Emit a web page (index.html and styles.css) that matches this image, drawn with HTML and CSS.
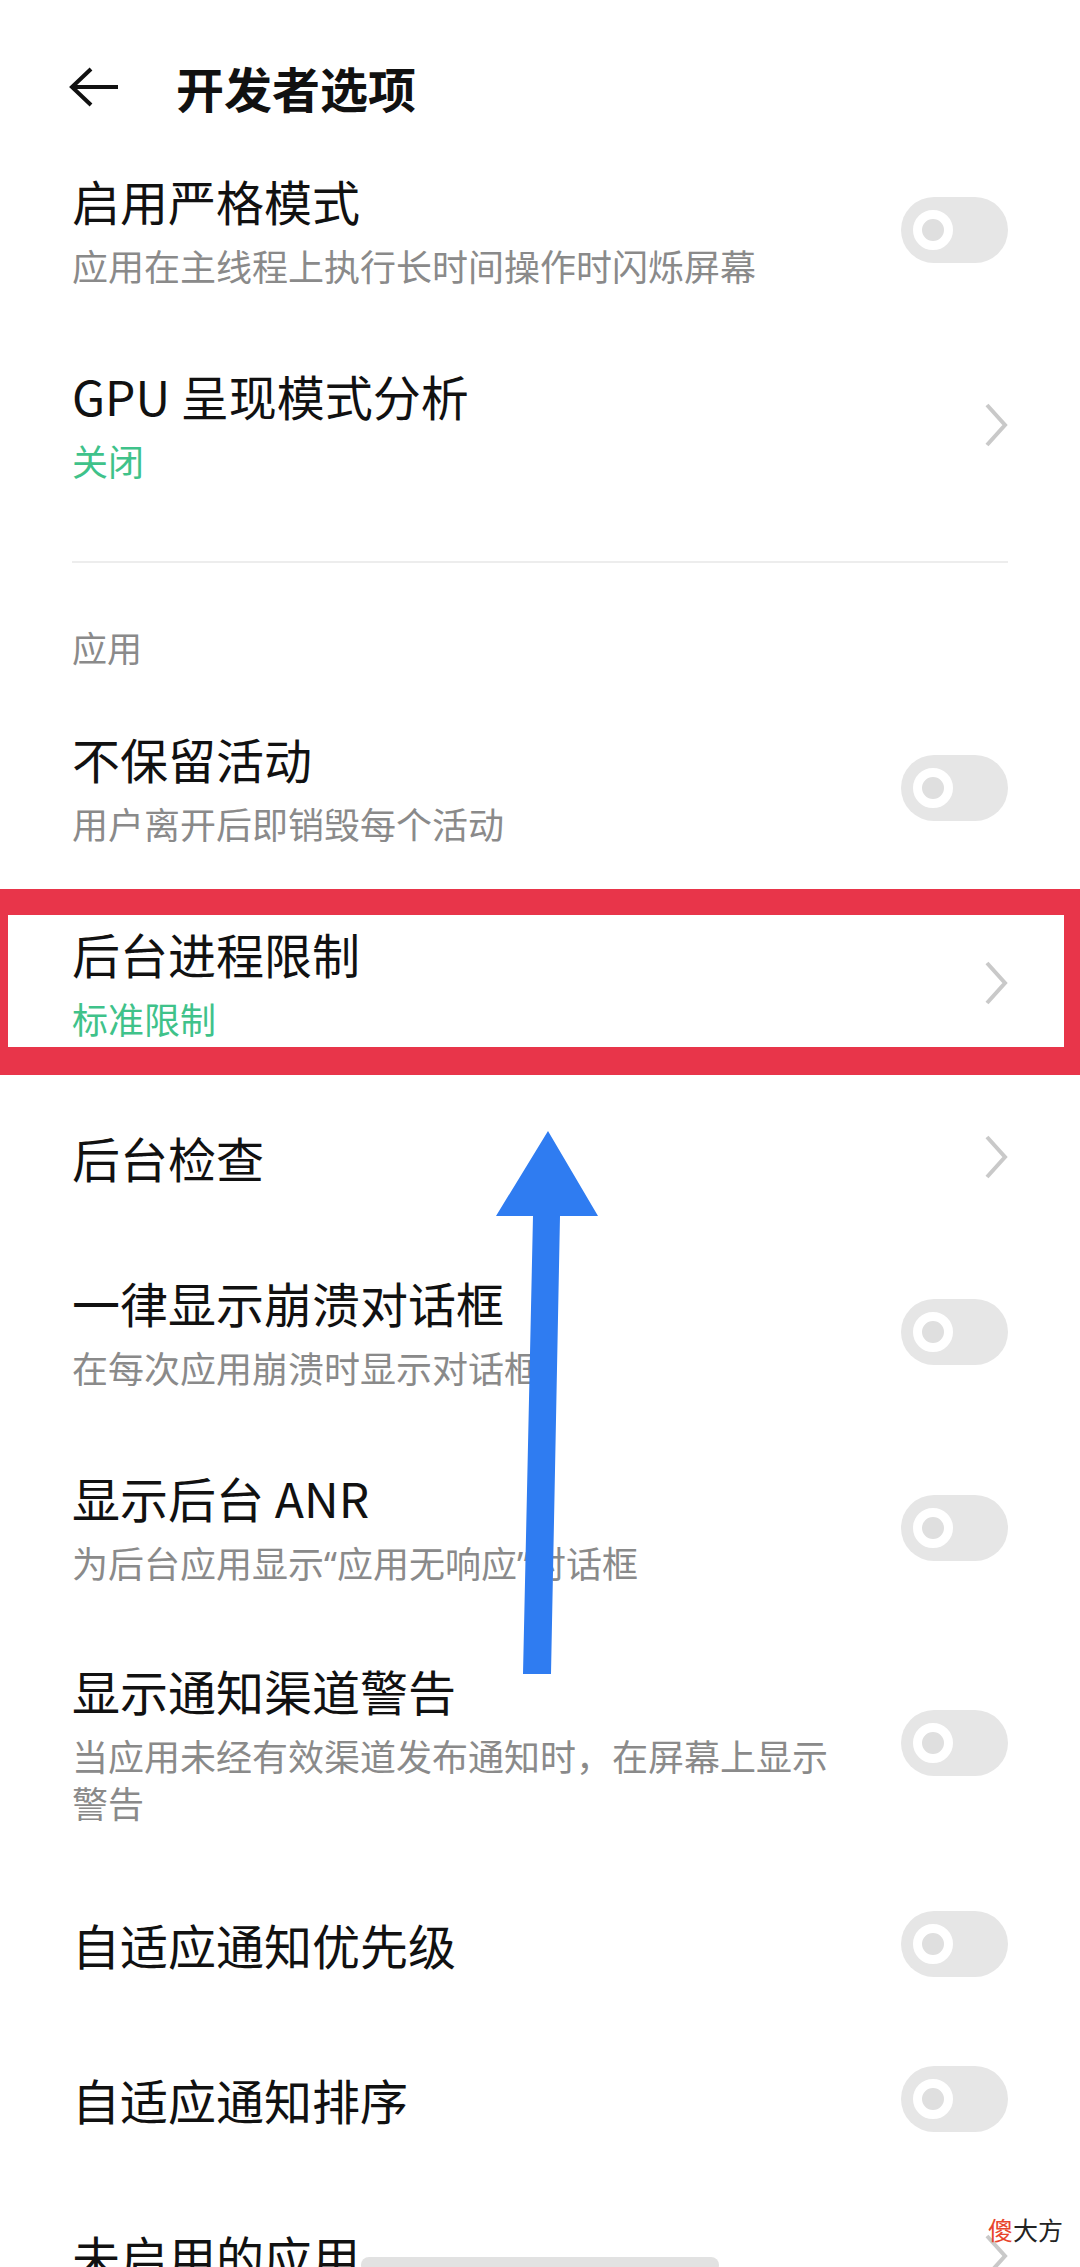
FILE: index.html
```html
<!DOCTYPE html>
<html lang="zh-CN">
<head>
    <meta charset="UTF-8">
    <meta name="viewport" content="width=device-width, initial-scale=1.0">
    <title>开发者选项</title>
    <link rel="stylesheet" href="styles.css">
</head>
<body>
    <div class="pantalla">
        <div class="cabecera">
            <svg class="atras" viewBox="0 0 50 40" width="50" height="40">
                <path d="M49 20 H4 M22 2 L3 20 L22 38" fill="none" stroke="#111" stroke-width="4" stroke-linejoin="miter"/>
            </svg>
            <h1 class="titulo">开发者选项</h1>
        </div>

        <div class="item">
            <div class="textos">
                <div class="nombre">启用严格模式</div>
                <div class="detalle">应用在主线程上执行长时间操作时闪烁屏幕</div>
            </div>
            <span class="switch"><span class="bola"></span></span>
        </div>

        <div class="item">
            <div class="textos">
                <div class="nombre">GPU 呈现模式分析</div>
                <div class="detalle verde">关闭</div>
            </div>
            <svg class="flecha" viewBox="0 0 24 44" width="24" height="44"><path d="M3 2 L21 22 L3 42" fill="none" stroke="#c9c9c9" stroke-width="4"/></svg>
        </div>

        <div class="separador"></div>
        <div class="seccion">应用</div>

        <div class="item">
            <div class="textos">
                <div class="nombre">不保留活动</div>
                <div class="detalle">用户离开后即销毁每个活动</div>
            </div>
            <span class="switch"><span class="bola"></span></span>
        </div>

        <div class="item marcado">
            <div class="textos">
                <div class="nombre">后台进程限制</div>
                <div class="detalle verde">标准限制</div>
            </div>
            <svg class="flecha" viewBox="0 0 24 44" width="24" height="44"><path d="M3 2 L21 22 L3 42" fill="none" stroke="#c9c9c9" stroke-width="4"/></svg>
            <div class="recuadro"></div>
        </div>

        <div class="item simple">
            <div class="textos">
                <div class="nombre">后台检查</div>
            </div>
            <svg class="flecha" viewBox="0 0 24 44" width="24" height="44"><path d="M3 2 L21 22 L3 42" fill="none" stroke="#c9c9c9" stroke-width="4"/></svg>
        </div>

        <div class="item">
            <div class="textos">
                <div class="nombre">一律显示崩溃对话框</div>
                <div class="detalle">在每次应用崩溃时显示对话框</div>
            </div>
            <span class="switch"><span class="bola"></span></span>
        </div>

        <div class="item">
            <div class="textos">
                <div class="nombre">显示后台 ANR</div>
                <div class="detalle">为后台应用显示<span class="comilla">“</span>应用无响应<span class="comilla">”</span>对话框</div>
            </div>
            <span class="switch"><span class="bola"></span></span>
        </div>

        <div class="item pegado">
            <div class="textos">
                <div class="nombre">显示通知渠道警告</div>
                <div class="detalle">当应用未经有效渠道发布通知时，在屏幕上显示警告</div>
            </div>
            <span class="switch"><span class="bola"></span></span>
        </div>

        <div class="item simple ajustado">
            <div class="textos">
                <div class="nombre">自适应通知优先级</div>
            </div>
            <span class="switch"><span class="bola"></span></span>
        </div>

        <div class="item simple">
            <div class="textos">
                <div class="nombre">自适应通知排序</div>
            </div>
            <span class="switch"><span class="bola"></span></span>
        </div>

        <div class="item simple">
            <div class="textos">
                <div class="nombre">未启用的应用</div>
            </div>
            <svg class="flecha" viewBox="0 0 24 44" width="24" height="44"><path d="M3 2 L21 22 L3 42" fill="none" stroke="#c9c9c9" stroke-width="4"/></svg>
        </div>

        <!-- flecha azul dibujada encima de la captura -->
        <svg class="flecha-azul" viewBox="0 0 120 560" width="120" height="560">
            <polygon points="58,11 108,96 70,96 61,554 33,554 43,96 6,96" fill="#2f7cf1"/>
        </svg>

        <div class="marca"><span class="rojo">傻</span>大方</div>
        <div class="barra-inicio"></div>
    </div>
</body>
</html>
```

FILE: styles.css
```css
*{
    margin: 0px;
    padding: 0px;
    box-sizing: border-box;
}
body{
    font-family: "Noto Sans CJK SC", "Noto Sans", sans-serif;
    background: #fff;
    color: #111;
}
.pantalla{
    position: relative;
    width: 1080px;
    height: 2267px;
    overflow: hidden;
    background: #fff;
}

.cabecera{
    display: flex;
    align-items: center;
    height: 132px;
    padding: 57px 0px 15px 69px;
}
.atras{
    flex: none;
}
.titulo{
    margin-left: 57px;
    font-size: 48px;
    line-height: 60px;
    font-weight: bold;
    color: #111;
}

.item{
    display: flex;
    align-items: center;
    padding: 38px 72px;
}
.item.simple{
    padding: 47px 72px;
}
.item.pegado{
    padding-top: 34px;
}
.item.ajustado{
    padding-bottom: 42px;
}
.textos{
    flex: 1;
    min-width: 0;
}
.nombre{
    font-size: 48px;
    line-height: 60px;
    color: #111;
}
.detalle{
    margin-top: 12px;
    font-size: 36px;
    line-height: 47px;
    color: #8a8a8a;
}
.comilla{
    font-family: "Noto Sans", sans-serif;
}
.verde{
    color: #3fc28a;
}

.switch{
    flex: none;
    display: flex;
    align-items: center;
    margin-left: 60px;
    width: 107px;
    height: 66px;
    border-radius: 33px;
    background: #e6e6e6;
    padding-left: 12px;
}
.bola{
    width: 40px;
    height: 40px;
    border-radius: 50%;
    border: 9px solid #fff;
    background: #dfdfdf;
}

.flecha{
    flex: none;
    margin-left: 60px;
}

.separador{
    margin: 39px 72px 0px 72px;
    height: 2px;
    background: #ededed;
}
.seccion{
    padding: 60px 72px 20px 72px;
    font-size: 35px;
    line-height: 47px;
    color: #8a8a8a;
}

.marcado{
    position: relative;
}
.recuadro{
    position: absolute;
    top: 4px;
    left: 0px;
    right: 0px;
    height: 186px;
    border-style: solid;
    border-color: #e8354a;
    border-width: 26px 16px 28px 8px;
}

.flecha-azul{
    position: absolute;
    left: 490px;
    top: 1120px;
}

.marca{
    position: absolute;
    left: 988px;
    top: 2214px;
    font-size: 25px;
    line-height: 30px;
    color: #222;
}
.rojo{
    color: #e8452c;
}

.barra-inicio{
    position: absolute;
    left: 361px;
    top: 2257px;
    width: 358px;
    height: 16px;
    border-radius: 8px;
    background: #e2e2e2;
}
```
